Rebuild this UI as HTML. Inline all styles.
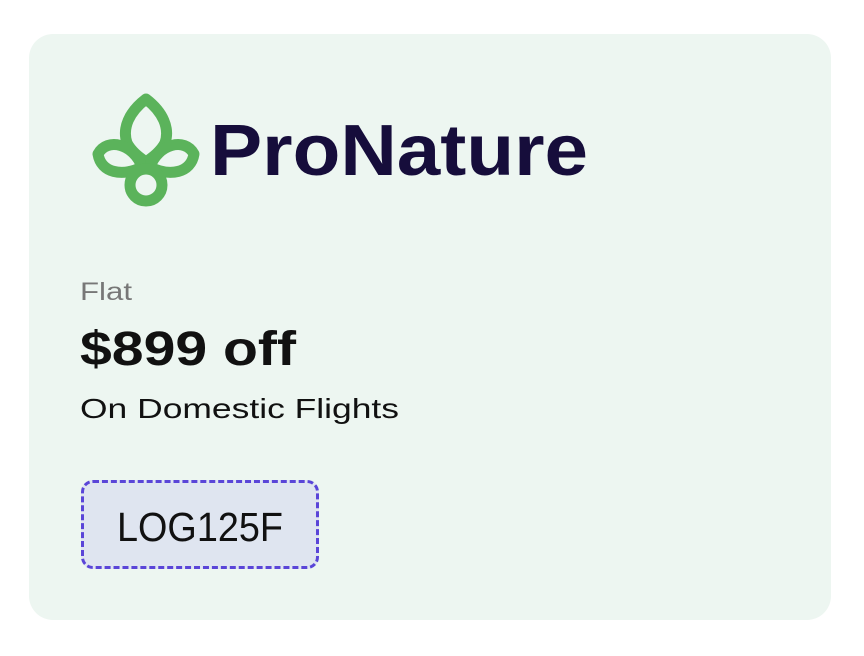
<!DOCTYPE html>
<html><head><style>
body{margin:0;width:864px;height:656px;background:#fff;font-family:"Liberation Sans",sans-serif;position:relative;overflow:hidden}
.card{position:absolute;left:29px;top:34px;width:802px;height:586px;background:#edf6f1;border-radius:24px}
.box{position:absolute;left:81px;top:480px;width:232px;height:83px;border:3px dashed #5a45d8;border-radius:12px;background:#dfe5f0}
</style></head><body>
<div class="card"></div>
<div class="box"></div>
<svg style="position:absolute;left:0;top:0" width="864" height="656">
<g fill="none" stroke="#5bb35b" stroke-width="11" stroke-linejoin="round">
<path d="M146,99 C129,112 122,128 127,143 C131,151 139,157 146,162 C153,157 161,151 165,143 C170,128 163,112 146,99 Z"/>
<path d="M98,154 C107,137 134,144 142,167 C122,177 101,173 98,154 Z"/>
<path d="M194,154 C185,137 158,144 150,167 C170,177 191,173 194,154 Z"/>
<circle cx="146" cy="185" r="16"/>
</g>
<text x="210" y="175" font-weight="bold" font-size="72" fill="#160d3b" textLength="378" lengthAdjust="spacingAndGlyphs">ProNature</text>
<text x="80" y="300" font-size="25" fill="#777" textLength="52" lengthAdjust="spacingAndGlyphs">Flat</text>
<text x="80" y="365" font-size="48" font-weight="bold" fill="#111" textLength="216" lengthAdjust="spacingAndGlyphs">$899 off</text>
<text x="80" y="418" font-size="28" fill="#111" textLength="319" lengthAdjust="spacingAndGlyphs">On Domestic Flights</text>
<text x="117" y="541" font-size="41" fill="#111" textLength="166" lengthAdjust="spacingAndGlyphs">LOG125F</text>
</svg>
</body></html>
